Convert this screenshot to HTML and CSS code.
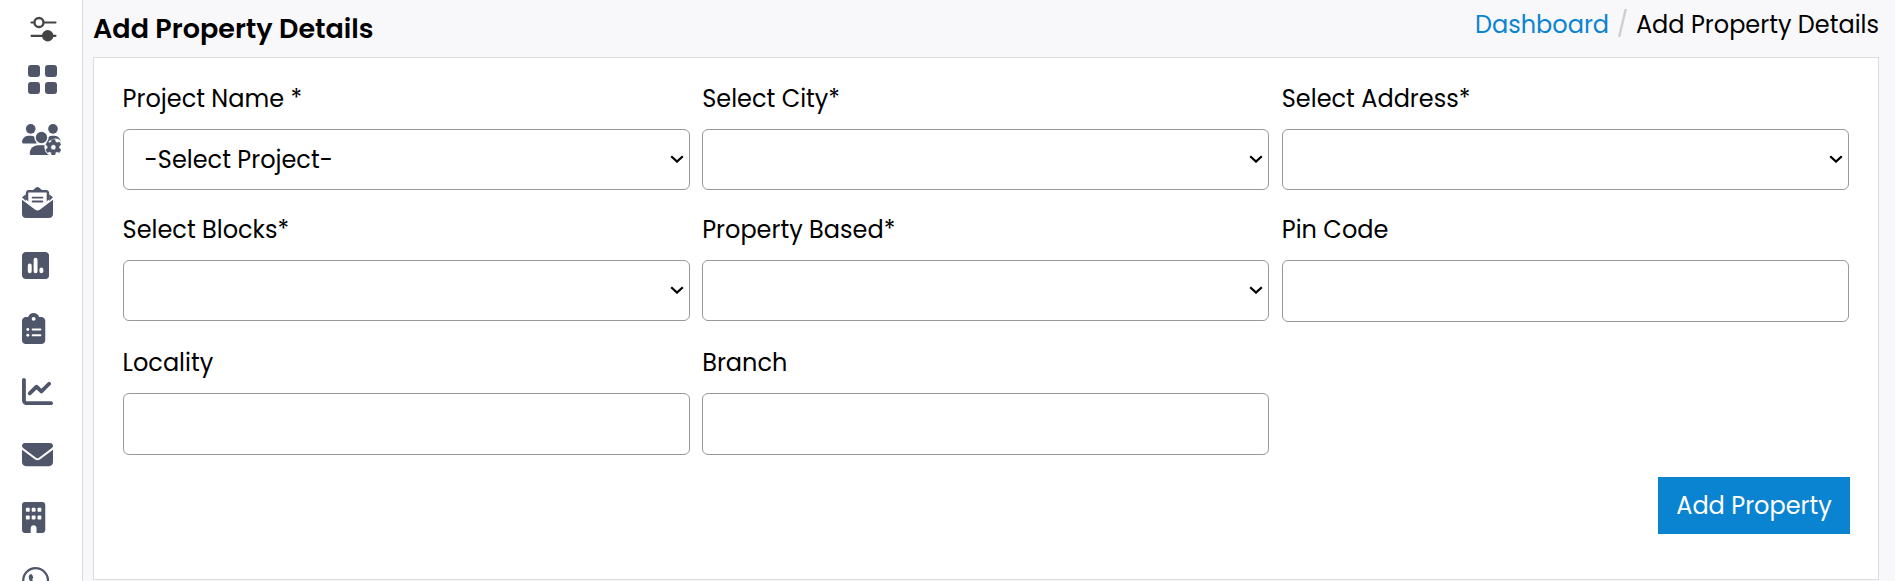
FILE: index.html
```html
<!DOCTYPE html>
<html lang="en">
<head>
<meta charset="utf-8">
<title>Add Property Details</title>
<link rel="stylesheet" href="styles.css">
</head>
<body>
<svg width="0" height="0" class="defs">
  <symbol id="chevron" viewBox="0 0 14 8"><path d="M1.2 1.2 7 6.6l5.800-5.400" fill="none" stroke="#000" stroke-width="2.2"/></symbol>
</svg>
<div class="app">
  <nav class="sidebar">
    <svg class="icon-toggle" width="27" height="26" viewBox="0 0 27 26"><g stroke="#444" stroke-width="2.200" stroke-linecap="round" fill="none"><path d="M1.500 6.500H4M14 6.500h11.500M1.500 19.800H25.500"/><circle cx="9" cy="6.500" r="4.500" stroke-width="2.300"/></g><circle cx="17.700" cy="19.800" r="5.700" fill="#444"/></svg>
    <svg class="icon-grid" width="29" height="29" viewBox="0 0 29 29"><rect width="12" height="12" rx="3"/><rect x="17" width="12" height="12" rx="3"/><rect y="17" width="12" height="12" rx="3"/><rect x="17" y="17" width="12" height="12" rx="3"/></svg>
    <div class="menu">
      <svg width="38.750" height="31" viewBox="0 0 640 512">
        <mask id="gear-gap"><rect width="640" height="512" fill="#fff"/><circle cx="518" cy="383" r="148" fill="#000"/></mask>
        <mask id="head-gap"><rect width="640" height="512" fill="#fff"/><circle cx="322" cy="224" r="118" fill="#000"/></mask>
        <circle cx="144" cy="80" r="80"/><circle cx="512" cy="80" r="80"/>
        <g mask="url(#head-gap)"><path d="M0 298.700C0 239.800 47.800 192 106.700 192h42.700c40 0 75 22 93 54v74H21.300C9.600 320 0 310.400 0 298.700z"/><path d="M405 320v-74c18-32 53-54 93-54h35.300c58.900 0 106.700 47.800 106.700 106.700L620 260a148 148 0 0 0-204 60z" /></g>
        <circle cx="322" cy="224" r="94"/>
        <path mask="url(#gear-gap)" d="M128 485.300C128 411.700 187.700 352 261.300 352h117.400L480 512H154.700C140 512 128 500 128 485.300z"/>
        <path d="m492 254h52l8 40 26 15 39-13 26 45-31 27v30l31 27-26 45-39-13-26 15-8 40h-52l-8-40-26-15-39 13-26-45 31-27v-30l-31-27 26-45 39 13 26-15zM518 341a42 42 0 1 0 0 84 42 42 0 0 0 0-84z" fill-rule="evenodd" stroke="#505669" stroke-width="8" stroke-linejoin="round"/>
      </svg>
      <svg width="31" height="31" viewBox="0 0 512 512"><path d="M64 208V96c0-26.500 21.500-48 48-48h72l38-32c20-20 48-20 68 0l38 32h72c26.500 0 48 21.500 48 48v112L256 350z"/><path d="M0 170l64-50v110zM512 170l-64-50v110z"/><path d="M104 90h304v170L256 375 104 260z" fill="#fff"/><path d="M0 448V210l219 164c22 17 52 17 74 0l219-164v238c0 35.300-28.700 64-64 64H64c-35.300 0-64-28.700-64-64z"/><path d="M176 176h160M176 240h160" stroke="#505669" stroke-width="31" stroke-linecap="round"/></svg>
      <svg width="27.130" height="31" viewBox="0 0 448 512"><path d="M64 32C28.700 32 0 60.700 0 96v320c0 35.300 28.700 64 64 64h320c35.300 0 64-28.700 64-64V96c0-35.300-28.700-64-64-64z"/><path d="M128 256v96M224 160v192M320 320v32" stroke="#fff" stroke-width="64" stroke-linecap="round"/></svg>
      <svg width="23.250" height="31" viewBox="0 0 384 512"><path d="M192 0c-41.800 0-77.400 26.700-90.500 64H64C28.700 64 0 92.700 0 128v320c0 35.300 28.700 64 64 64h256c35.300 0 64-28.700 64-64V128c0-35.300-28.700-64-64-64h-37.500C269.400 26.700 233.800 0 192 0z"/><g fill="#fff"><circle cx="192" cy="96" r="32"/><circle cx="96" cy="272" r="24"/><circle cx="96" cy="368" r="24"/></g><path d="M176 272h128M176 368h128" stroke="#fff" stroke-width="32" stroke-linecap="round"/></svg>
      <svg width="31" height="31" viewBox="0 0 512 512"><path d="M64 64c0-17.700-14.300-32-32-32S0 46.300 0 64V400c0 44.200 35.800 80 80 80H480c17.700 0 32-14.300 32-32s-14.300-32-32-32H80c-8.800 0-16-7.200-16-16V64zm406.600 86.600c12.500-12.500 12.500-32.800 0-45.300s-32.800-12.500-45.300 0L320 210.700l-57.400-57.400c-12.500-12.500-32.800-12.500-45.300 0l-112 112c-12.500 12.500-12.500 32.800 0 45.300s32.800 12.500 45.300 0L240 221.300l57.400 57.400c12.500 12.500 32.800 12.500 45.300 0l128-128z"/></svg>
      <svg width="31" height="31" viewBox="0 0 512 512"><path d="M48 64C21.500 64 0 85.500 0 112c0 15.100 7.100 29.300 19.200 38.400L236.800 313.600c11.400 8.500 27 8.500 38.400 0L492.800 150.400c12.100-9.100 19.200-23.300 19.200-38.400c0-26.500-21.500-48-48-48H48zM0 176V384c0 35.300 28.700 64 64 64H448c35.300 0 64-28.700 64-64V176L294.400 339.200c-22.800 17.100-54 17.100-76.800 0L0 176z"/></svg>
      <svg width="23.250" height="31" viewBox="0 0 384 512"><path d="M48 0C21.500 0 0 21.500 0 48v416c0 26.500 21.500 48 48 48h96v-80c0-26.500 21.500-48 48-48s48 21.500 48 48v80h96c26.500 0 48-21.500 48-48V48c0-26.500-21.500-48-48-48z"/><g fill="#fff"><rect x="64" y="96" width="64" height="64" rx="16"/><rect x="160" y="96" width="64" height="64" rx="16"/><rect x="256" y="96" width="64" height="64" rx="16"/><rect x="64" y="224" width="64" height="64" rx="16"/><rect x="160" y="224" width="64" height="64" rx="16"/><rect x="256" y="224" width="64" height="64" rx="16"/></g></svg>
      <svg width="27.130" height="31" viewBox="0 0 448 512"><path d="M380.900 97.100C339 55.100 283.200 32 223.900 32c-122.400 0-222 99.600-222 222 0 39.100 10.200 77.300 29.600 111L0 480l117.700-30.900c32.400 17.700 68.900 27 106.100 27h.1c122.300 0 224.100-99.600 224.100-222 0-59.300-25.200-115-67.100-157zm-157 341.600c-33.200 0-65.700-8.900-94-25.700l-6.700-4-69.800 18.300L72 359.200l-4.400-7c-18.500-29.400-28.200-63.300-28.200-98.200 0-101.700 82.800-184.500 184.600-184.500 49.300 0 95.600 19.200 130.400 54.100 34.800 34.900 56.200 81.200 56.100 130.500 0 101.800-84.900 184.600-186.600 184.600zm101.200-138.200c-5.500-2.800-32.800-16.200-37.900-18-5.100-1.900-8.800-2.800-12.500 2.800-3.700 5.600-14.300 18-17.600 21.800-3.200 3.700-6.500 4.200-12 1.400-32.600-16.300-54-29.100-75.500-66-5.700-9.800 5.700-9.100 16.300-30.300 1.800-3.700.9-6.900-.5-9.700-1.400-2.800-12.500-30.100-17.100-41.200-4.500-10.800-9.100-9.300-12.500-9.500-3.200-.2-6.900-.2-10.600-.2-3.700 0-9.700 1.400-14.800 6.900-5.100 5.600-19.400 19-19.400 46.300 0 27.300 19.900 53.700 22.600 57.400 2.800 3.700 39.100 59.700 94.800 83.800 35.200 15.200 49 16.500 66.600 13.900 10.700-1.600 32.800-13.400 37.400-26.400 4.600-13 4.600-24.100 3.200-26.400-1.300-2.500-5-3.900-10.500-6.600z"/></svg>
    </div>
  </nav>
  <main class="main">
    <header class="header">
      <h1 class="title">Add Property Details</h1>
      <div class="breadcrumb"><a class="crumb-link">Dashboard</a><span class="slash">/</span><span>Add Property Details</span></div>
    </header>
    <form class="card">
      <div class="fields">
        <div class="field"><label class="label">Project Name *</label><div class="select"><select class="control"><option>-Select Project-</option></select><svg class="chevron" width="14" height="8"><use href="#chevron"/></svg></div></div>
        <div class="field"><label class="label">Select City*</label><div class="select"><select class="control"></select><svg class="chevron" width="14" height="8"><use href="#chevron"/></svg></div></div>
        <div class="field"><label class="label">Select Address*</label><div class="select"><select class="control"></select><svg class="chevron" width="14" height="8"><use href="#chevron"/></svg></div></div>
        <div class="field"><label class="label">Select Blocks*</label><div class="select"><select class="control"></select><svg class="chevron" width="14" height="8"><use href="#chevron"/></svg></div></div>
        <div class="field"><label class="label">Property Based*</label><div class="select"><select class="control"></select><svg class="chevron" width="14" height="8"><use href="#chevron"/></svg></div></div>
        <div class="field"><label class="label">Pin Code</label><input class="control input" type="text"></div>
        <div class="field"><label class="label">Locality</label><input class="control input" type="text"></div>
        <div class="field"><label class="label">Branch</label><input class="control input" type="text"></div>
      </div>
      <div class="actions"><button class="submit" type="button">Add Property</button></div>
    </form>
  </main>
</div>
</body>
</html>
```
FILE: styles.css
```css
* { box-sizing: border-box; }
body { margin: 0; font: 24px/36px Poppins, Inter, sans-serif; color: #000; background: #f8f8fb; }
.defs { display: block; }
.app { display: flex; height: 581px; overflow: hidden; }
.sidebar { flex: none; width: 83px; background: #fff; border-right: 1px solid #dcdcdc; display: flex; flex-direction: column; fill: #505669; }
.sidebar svg { flex: none; display: block; }
.icon-toggle { margin: 16px 0 0 30px; }
.icon-grid { margin: 23px 0 0 28.300px; }
.menu { display: flex; flex-direction: column; gap: 32px; margin: 30px 0 0 22.300px; }
.main { flex: 1; padding: 0 16px 0 10px; }
.header { display: flex; justify-content: space-between; height: 57px; }
.title { margin: 11px 0 0; font-size: 27px; font-weight: 600; line-height: 36px; }
.breadcrumb { display: flex; margin-top: 7px; }
.crumb-link { color: #0a83d1; }
.slash { color: #ccc; margin: 0 7.700px; }
.card { background: #fff; border: 1px solid #dcdcdc; height: 523px; padding: 23px 28px 0 28.600px; }
.fields { display: grid; grid-template-columns: 567.300px 567.300px 567.300px; grid-template-rows: 109px 111px 110px; gap: 22px 12.300px; }
.field { display: flex; flex-direction: column; }
.label { display: block; height: 36px; margin-bottom: 12px; white-space: nowrap; }
.select { position: relative; }
.control { display: block; width: 100%; height: 61px; padding: 0 21px; font: inherit; color: #000; background: #fff; border: 1px solid #999; border-radius: 6px; appearance: none; outline: none; }
.input { height: 62px; }
.chevron { position: absolute; right: 6px; top: 26px; pointer-events: none; }
.actions { display: flex; justify-content: flex-end; margin-top: 22px; }
.submit { width: 192px; height: 57px; padding: 0; border: 0; background: #0a83d1; color: #fff; font: inherit; }
```
